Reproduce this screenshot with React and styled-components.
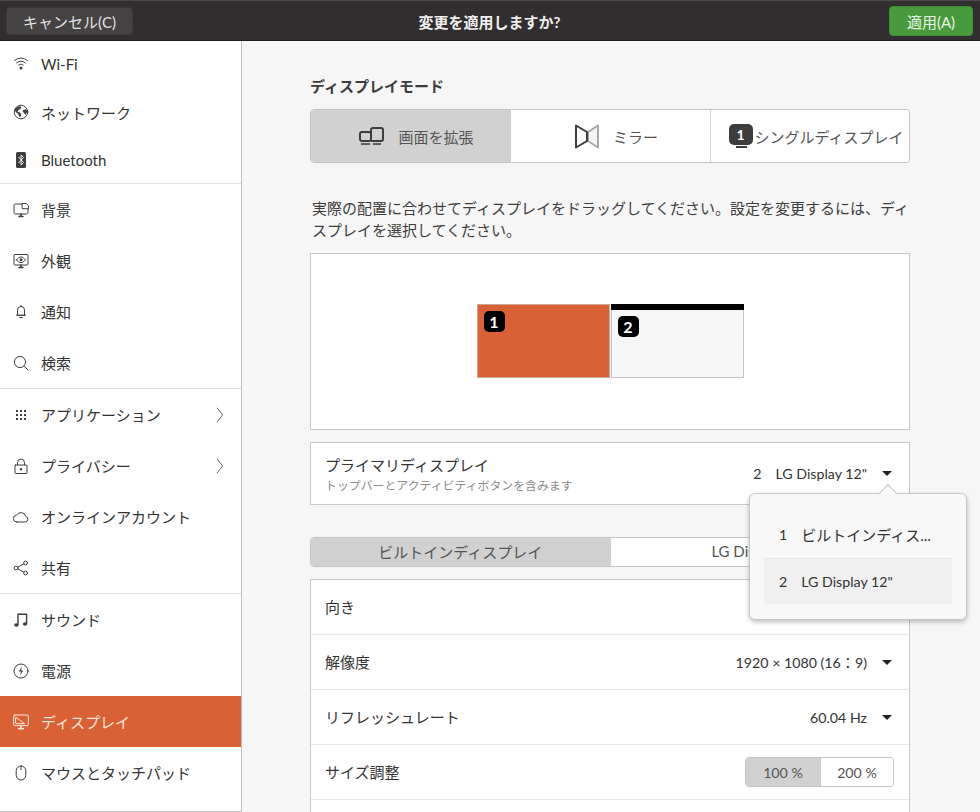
import React from "react"
import styled, { createGlobalStyle } from "styled-components"

const fontStack = `Lato, "Noto Sans CJK JP", sans-serif`

const GlobalStyle = createGlobalStyle`
  html, body {
    margin: 0;
    height: 100%;
    overflow: hidden;
    background: #f6f6f6;
  }
  body {
    font-family: ${fontStack};
    font-size: 15px;
    color: #3d3d3d;
  }
  * { box-sizing: border-box; }
`

const Window = styled.div`
  width: 980px;
  height: 812px;
  display: flex;
  flex-direction: column;
  overflow: hidden;
`

const HeaderBar = styled.header`
  height: 41px;
  flex: none;
  display: grid;
  grid-template-columns: 1fr auto 1fr;
  align-items: center;
  padding: 1px 7px 0 6px;
  background: #302e2e;
  border-top: 1px solid #4b4848;
  border-bottom: 1px solid #1d1c1c;
`

const HeaderTitle = styled.div`
  color: #f0eeee;
  font-weight: 700;
`

const CancelButton = styled.button`
  justify-self: start;
  width: 127px;
  height: 28px;
  padding: 0;
  font: inherit;
  color: #e4e2e2;
  background: #454343;
  border: 1px solid #3a3838;
  border-radius: 4px;
`

const ApplyButton = styled.button`
  justify-self: end;
  width: 84px;
  height: 30px;
  padding: 0;
  font: inherit;
  color: #eaf5e8;
  background: #489b3d;
  border: 1px solid #3f8a36;
  border-radius: 4px;
`

const Body = styled.div`
  flex: 1;
  min-height: 0;
  display: flex;
`

const Sidebar = styled.nav`
  width: 242px;
  flex: none;
  background: #fff;
  border-right: 1px solid #bdbdbd;
  border-bottom: 1px solid #c9c9c9;
`

const SidebarGroup = styled.div`
  & + & {
    border-top: 1px solid #dfdfdf;
  }
`

const NavRow = styled.div`
  height: ${(p) => p.$height || 51}px;
  display: flex;
  align-items: center;
  padding: 0 17px 0 13px;
  color: ${(p) => (p.$active ? "#fbe4da" : "#333")};
  background: ${(p) => (p.$active ? "#d86136" : "transparent")};
`

const NavIcon = styled.span`
  width: 16px;
  height: 16px;
  margin-right: 12px;
  display: flex;
  color: ${(p) => (p.$active ? "#fbe4da" : "#3f3f3f")};
`

const NavLabel = styled.span`
  flex: 1;
`

const Content = styled.main`
  flex: 1;
  min-width: 0;
  padding: 35px 70px 0 68px;
  position: relative;
`

const SectionTitle = styled.h2`
  margin: 0 0 13px;
  font-size: 15px;
  line-height: 20px;
  font-weight: 700;
  color: #3d3d3d;
`

const Segmented = styled.div`
  display: flex;
  height: ${(p) => p.$height}px;
  background: #fff;
  border: 1px solid #c4c4c4;
  border-radius: 4px;
  overflow: hidden;
`

const Segment = styled.div`
  flex: ${(p) => (p.$fixed ? `0 0 ${p.$fixed}px` : "1 1 0")};
  min-width: 0;
  display: flex;
  align-items: center;
  justify-content: center;
  gap: ${(p) => p.$gap || 0}px;
  padding-left: ${(p) => p.$inset || 0}px;
  white-space: nowrap;
  color: #555;
  background: ${(p) => (p.$on ? "#d1d1d1" : "#fff")};
  & + & {
    border-left: 1px solid #cfcfcf;
  }
`

const TabSegment = styled(Segment)`
  padding-bottom: 2px;
`

const ScaleSegment = styled(Segment)`
  font-size: 14.2px;
`

const NumberBadge = styled.span`
  width: ${(p) => p.$size}px;
  height: ${(p) => p.$size}px;
  display: flex;
  align-items: center;
  justify-content: center;
  flex: none;
  color: #fff;
  font-weight: 700;
  font-size: ${(p) => p.$font}px;
  background: #000;
  border-radius: 5px;
`

const SingleBadge = styled(NumberBadge)`
  width: 24px;
  height: 21px;
  margin-bottom: 3px;
  position: relative;
  background: #3d3d3d;

  &::after {
    content: "";
    position: absolute;
    left: 7px;
    right: 6px;
    bottom: -3px;
    height: 2px;
    background: #3d3d3d;
  }
`

const Hint = styled.p`
  margin: 34px 0 12px 2px;
  line-height: 22px;
  color: #3d3d3d;
`

const Arrangement = styled.div`
  height: 177px;
  display: flex;
  align-items: flex-start;
  justify-content: center;
  gap: 1px;
  padding: 50px 0 0 0;
  background: #fff;
  border: 1px solid #c9c9c9;
`

const Monitor = styled.div`
  width: 133px;
  height: 74px;
  position: relative;
  background: ${(p) => (p.$selected ? "#d86136" : "#f6f6f6")};
  border: 1px solid ${(p) => (p.$selected ? "#c9a898" : "#c4c4c4")};

  &::before {
    content: "";
    display: ${(p) => (p.$primary ? "block" : "none")};
    height: 6px;
    margin: -1px -1px 0;
    background: #000;
  }
`

const MonitorBadge = styled(NumberBadge)`
  position: absolute;
  left: 6px;
  top: ${(p) => p.$top}px;
`

const PrimaryRow = styled.div`
  height: 63px;
  margin: 12px 0 32px;
  display: flex;
  align-items: center;
  justify-content: space-between;
  padding: 0 15px 0 14px;
  background: #fff;
  border: 1px solid #c9c9c9;
`

const RowLabel = styled.div`
  color: #333;
`

const SettingLabel = styled(RowLabel)`
  margin-bottom: 2px;
`

const SubLabel = styled.div`
  margin-top: 1px;
  font-size: 11.9px;
  color: #8a8a8a;
`

const Value = styled.div`
  display: flex;
  align-items: center;
  font-size: 14.2px;
  color: #333;
  white-space: nowrap;
`

const ValueIndex = styled.span`
  font-size: 14.2px;
  margin-right: 14px;
`

const Caret = styled.span`
  width: 0;
  height: 0;
  margin: 0 2px 0 15px;
  border-left: 5px solid transparent;
  border-right: 5px solid transparent;
  border-top: 5px solid #222;
`

const Settings = styled.div`
  margin-top: 12px;
  background: #fff;
  border: 1px solid #c9c9c9;
  border-bottom: 0;
  height: 300px;
`

const SettingRow = styled.div`
  height: 55px;
  display: flex;
  align-items: center;
  justify-content: space-between;
  padding: 0 15px 0 14px;
  border-bottom: 1px solid #e6e6e6;
`

const Popover = styled.div`
  position: absolute;
  left: 507px;
  top: 452px;
  width: 218px;
  height: 127px;
  padding: 16px 14px;
  background: #f8f8f8;
  border: 1px solid #c8c8c8;
  border-radius: 6px;
  box-shadow: 0 2px 5px rgba(0, 0, 0, 0.25);

  &::before {
    content: "";
    position: absolute;
    top: -7px;
    left: 131px;
    width: 13px;
    height: 13px;
    background: #f8f8f8;
    border-left: 1px solid #c8c8c8;
    border-top: 1px solid #c8c8c8;
    transform: rotate(45deg);
  }
`

const PopoverItem = styled.div`
  height: ${(p) => (p.$on ? 46 : 48)}px;
  display: flex;
  align-items: center;
  padding-left: 15px;
  color: #333;
  white-space: nowrap;
  background: ${(p) => (p.$on ? "#f0f0f0" : "transparent")};
  border-top: ${(p) => (p.$on ? "1px solid #e8e8e8" : "0")};
`

const Line = ({ children }) => (
  <svg
    width="16"
    height="16"
    viewBox="0 0 16 16"
    fill="none"
    stroke="currentColor"
    strokeWidth="1"
    strokeLinecap="round"
    strokeLinejoin="round"
  >
    {children}
  </svg>
)

const WifiIcon = () => (
  <Line>
    <path d="M1.5 4.5a9.5 9.5 0 0 1 13 0" />
    <path d="M3.6 6.8a6.5 6.5 0 0 1 8.8 0" />
    <path d="M5.7 9a3.4 3.4 0 0 1 4.6 0" />
    <circle cx="8" cy="12" r="1.5" fill="currentColor" stroke="none" />
  </Line>
)

const GlobeIcon = () => (
  <Line>
    <circle cx="8" cy="8" r="6.8" />
    <path
      d="M4.5 3l2.6-1 1.2 1.5-1 1.6-2 1-.8 1.6 2.4.8 1.4 1.4-.8 3-1.4-.5-1-2.6-2.6-1.8-.6-2.8zM10 6l3.5-.8.8 2.6-1.6 3-1.6-1.6-1.4-1.6z"
      fill="currentColor"
      stroke="none"
    />
  </Line>
)

const BluetoothIcon = () => (
  <svg width="16" height="16" viewBox="0 0 16 16">
    <rect x="3" y="0" width="10" height="16" rx="1.5" fill="currentColor" />
    <path d="M5.5 5l5 5.5L8 13V3l2.5 2.5-5 5.5" fill="none" stroke="#fff" strokeWidth="0.9" />
  </svg>
)

const BackgroundIcon = () => (
  <Line>
    <path d="M9 2H2.5A1.5 1.5 0 0 0 1 3.5v7A1.5 1.5 0 0 0 2.5 12h11a1.5 1.5 0 0 0 1.5-1.5V7" />
    <path d="M9.5 1.5h3.8l2.2 2.2v3H9.5z" />
    <path d="M6 14.5h4M8 12v2" strokeWidth="1.6" />
  </Line>
)

const AppearanceIcon = () => (
  <Line>
    <rect x="1" y="1.5" width="14" height="10.5" rx="1" />
    <path d="M3.5 6.8C5 4.8 6.4 4 8 4s3 .8 4.5 2.8C11 8.8 9.6 9.6 8 9.6S5 8.8 3.5 6.8z" />
    <circle cx="8" cy="6.8" r="1.5" fill="currentColor" stroke="none" />
    <path d="M6 14.5h4M8 12v2" strokeWidth="1.6" />
  </Line>
)

const BellIcon = () => (
  <Line>
    <path d="M4.5 11V6a3.5 3.5 0 0 1 7 0v5z" />
    <path d="M3.5 11.2h9M8 1.4v1M6.5 13.6h3" />
  </Line>
)

const SearchIcon = () => (
  <Line>
    <circle cx="7" cy="7" r="5.6" />
    <path d="M11 11l4 4" />
  </Line>
)

const GridIcon = () => (
  <svg width="16" height="16" viewBox="0 0 16 16" fill="currentColor">
    {[3, 7, 11].map((y) =>
      [3, 7, 11].map((x) => <rect key={`${x}-${y}`} x={x} y={y} width="2" height="2" />)
    )}
  </svg>
)

const LockIcon = () => (
  <Line>
    <rect x="2" y="7" width="12" height="8.5" rx="0.6" />
    <path d="M4.5 7V4.6a3.5 3.5 0 0 1 7 0V7" />
    <circle cx="8" cy="11.2" r="1.2" fill="currentColor" stroke="none" />
  </Line>
)

const CloudIcon = () => (
  <Line>
    <path d="M4 13h8.2a2.9 2.9 0 0 0 .5-5.7A4.9 4.9 0 0 0 3.6 6.2 3.4 3.4 0 0 0 4 13z" />
  </Line>
)

const ShareIcon = () => (
  <Line>
    <circle cx="3" cy="8" r="1.9" />
    <circle cx="12.6" cy="3" r="1.9" />
    <circle cx="12.6" cy="13" r="1.9" />
    <path d="M4.7 7.1l6.2-3.2M4.7 8.9l6.2 3.2" />
  </Line>
)

const MusicIcon = () => (
  <svg width="16" height="16" viewBox="0 0 16 16" fill="none" stroke="currentColor" strokeWidth="1.4">
    <path d="M5 13V2.2h8.6V12" />
    <ellipse cx="3.4" cy="13" rx="2.2" ry="1.8" fill="currentColor" stroke="none" />
    <ellipse cx="12" cy="12" rx="2.2" ry="1.8" fill="currentColor" stroke="none" />
  </svg>
)

const PowerIcon = () => (
  <Line>
    <circle cx="8" cy="8" r="7" />
    <path d="M8.8 3.4L5.8 8.6h2.1l-.7 4 3-5.2H8.1z" fill="currentColor" stroke="none" />
  </Line>
)

const DisplayIcon = () => (
  <Line>
    <rect x="0.7" y="1" width="14.6" height="10.6" rx="1" />
    <path d="M3 3.4l8.6 6.2H3z" />
    <path d="M5.6 14.6h4.8M8 11.6v3" strokeWidth="1.6" />
  </Line>
)

const MouseIcon = () => (
  <Line>
    <rect x="3.2" y="1" width="9.6" height="14" rx="4.8" />
    <path d="M8 1v3.6" />
  </Line>
)

const ChevronIcon = () => (
  <svg width="8" height="16" viewBox="0 0 8 16" fill="none" stroke="#555" strokeWidth="0.9">
    <path d="M1 .8L6.6 8 1 15.2" />
  </svg>
)

const JoinIcon = () => (
  <svg width="25" height="18" viewBox="0 0 25 18" fill="none" stroke="#3d3d3d" strokeWidth="2">
    <rect x="1" y="5" width="11" height="9" rx="2" />
    <path d="M12 14V3a2 2 0 0 1 2-2h8a2 2 0 0 1 2 2v9a2 2 0 0 1-2 2H12" />
    <path d="M2 17h9M14 17h8" strokeWidth="1.4" />
  </svg>
)

const MirrorIcon = () => (
  <svg width="24" height="25" viewBox="0 0 24 25" fill="#f4f4f4">
    <path d="M23 1.5l-10 6.5v9l10 6.5z" stroke="#a8a8a8" strokeWidth="2" strokeLinejoin="round" />
    <path d="M1 1.5l11 6.5v9L1 23.5z" fill="#fff" stroke="#3d3d3d" strokeWidth="2" strokeLinejoin="round" />
  </svg>
)

const navGroups = [
  [
    { label: "Wi-Fi", Icon: WifiIcon, height: 46 },
    { label: "ネットワーク", Icon: GlobeIcon, height: 50 },
    { label: "Bluetooth", Icon: BluetoothIcon, height: 46 },
  ],
  [
    { label: "背景", Icon: BackgroundIcon },
    { label: "外観", Icon: AppearanceIcon },
    { label: "通知", Icon: BellIcon },
    { label: "検索", Icon: SearchIcon },
  ],
  [
    { label: "アプリケーション", Icon: GridIcon, more: true },
    { label: "プライバシー", Icon: LockIcon, more: true },
    { label: "オンラインアカウント", Icon: CloudIcon },
    { label: "共有", Icon: ShareIcon },
  ],
  [
    { label: "サウンド", Icon: MusicIcon },
    { label: "電源", Icon: PowerIcon },
    { label: "ディスプレイ", Icon: DisplayIcon, active: true },
    { label: "マウスとタッチパッド", Icon: MouseIcon },
  ],
]

export default function App() {
  return (
    <Window>
      <GlobalStyle />
      <HeaderBar>
        <CancelButton>キャンセル(C)</CancelButton>
        <HeaderTitle>変更を適用しますか?</HeaderTitle>
        <ApplyButton>適用(A)</ApplyButton>
      </HeaderBar>
      <Body>
        <Sidebar>
          {navGroups.map((group, i) => (
            <SidebarGroup key={i}>
              {group.map(({ label, Icon, height, more, active }) => (
                <NavRow key={label} $height={height} $active={active}>
                  <NavIcon $active={active}>
                    <Icon />
                  </NavIcon>
                  <NavLabel>{label}</NavLabel>
                  {more && <ChevronIcon />}
                </NavRow>
              ))}
            </SidebarGroup>
          ))}
        </Sidebar>
        <Content>
          <SectionTitle>ディスプレイモード</SectionTitle>
          <Segmented $height={54}>
            <Segment $on $fixed={199} $gap={14} $inset={12}>
              <JoinIcon />
              画面を拡張
            </Segment>
            <Segment $fixed={200} $gap={14} $inset={12}>
              <MirrorIcon />
              ミラー
            </Segment>
            <Segment $gap={2} $inset={12}>
              <SingleBadge $font={14}>1</SingleBadge>
              シングルディスプレイ
            </Segment>
          </Segmented>
          <Hint>
            実際の配置に合わせてディスプレイをドラッグしてください。設定を変更するには、ディスプレイを選択してください。
          </Hint>
          <Arrangement>
            <Monitor $selected>
              <MonitorBadge $size={21} $font={16} $top={6}>1</MonitorBadge>
            </Monitor>
            <Monitor $primary>
              <MonitorBadge $size={21} $font={16} $top={11}>2</MonitorBadge>
            </Monitor>
          </Arrangement>
          <PrimaryRow>
            <div>
              <RowLabel>プライマリディスプレイ</RowLabel>
              <SubLabel>トップバーとアクティビティボタンを含みます</SubLabel>
            </div>
            <Value>
              <ValueIndex>2</ValueIndex>
              LG Display 12"
              <Caret />
            </Value>
          </PrimaryRow>
          <Segmented $height={30}>
            <TabSegment $on>ビルトインディスプレイ</TabSegment>
            <TabSegment>LG Display 12"</TabSegment>
          </Segmented>
          <Settings>
            <SettingRow>
              <SettingLabel>向き</SettingLabel>
            </SettingRow>
            <SettingRow>
              <SettingLabel>解像度</SettingLabel>
              <Value>
                1920 × 1080 (16：9)
                <Caret />
              </Value>
            </SettingRow>
            <SettingRow>
              <SettingLabel>リフレッシュレート</SettingLabel>
              <Value>
                60.04 Hz
                <Caret />
              </Value>
            </SettingRow>
            <SettingRow>
              <SettingLabel>サイズ調整</SettingLabel>
              <Segmented $height={30}>
                <ScaleSegment $on $fixed={74}>100 %</ScaleSegment>
                <ScaleSegment $fixed={73}>200 %</ScaleSegment>
              </Segmented>
            </SettingRow>
          </Settings>
          <Popover>
            <PopoverItem>
              <ValueIndex>1</ValueIndex>
              ビルトインディス...
            </PopoverItem>
            <PopoverItem $on>
              <ValueIndex>2</ValueIndex>
              <Value>LG Display 12"</Value>
            </PopoverItem>
          </Popover>
        </Content>
      </Body>
    </Window>
  )
}
